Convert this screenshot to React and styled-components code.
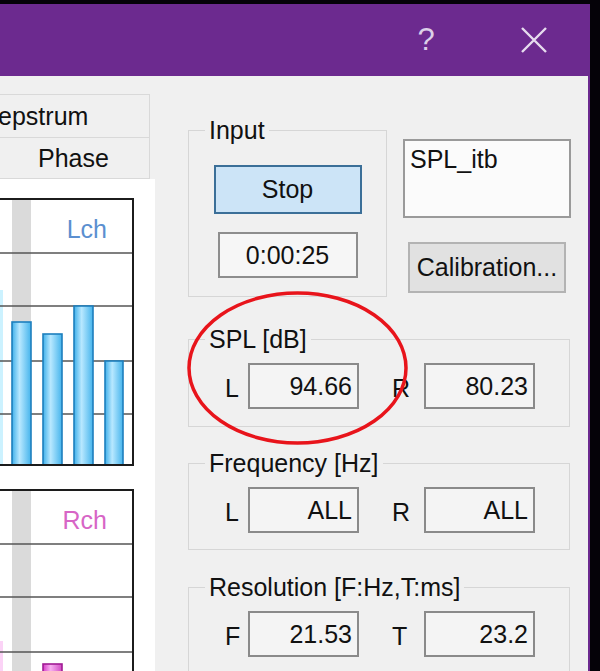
import styled, { createGlobalStyle } from 'styled-components'

const GlobalStyle = createGlobalStyle`
  html, body {
    margin: 0;
    padding: 0;
    background: #000;
  }
  body {
    font-family: "Liberation Sans", Arial, sans-serif;
    color: #111;
  }
`

const lchBars = [
  { x: 50, w: 19, top: 122 },
  { x: 81, w: 19, top: 134 },
  { x: 112, w: 19, top: 106 },
  { x: 143, w: 18, top: 161 },
]

const rchBars = [{ x: 81, w: 19, top: 173 }]

const Chart = ({ label, color, bars, glow, glowTop, id, stops, stroke }) => (
  <ChartFrame>
    <svg width="170" height="264" viewBox="0 0 170 264">
      <defs>
        <linearGradient id={id} x1="0" x2="1" y1="0" y2="0">
          <stop offset="0%" stopColor={stops[0]} />
          <stop offset="40%" stopColor={stops[1]} />
          <stop offset="100%" stopColor={stops[2]} />
        </linearGradient>
      </defs>
      <rect x="50" y="0" width="19" height="264" fill="#dadada" />
      <rect x="0" y={glowTop} width="41" height={264 - glowTop} fill={glow} />
      {[53, 106, 161, 214].map(y => (
        <line key={y} x1="0" x2="170" y1={y} y2={y} stroke="#555" strokeWidth="1.6" />
      ))}
      {bars.map(b => (
        <rect
          key={b.x}
          x={b.x}
          y={b.top}
          width={b.w}
          height={266 - b.top}
          fill={`url(#${id})`}
          stroke={stroke}
          strokeWidth="1.6"
        />
      ))}
      <text
        x="145"
        y="38"
        textAnchor="end"
        fontSize="25"
        fontFamily="Liberation Sans, Arial, sans-serif"
        fill={color}
      >
        {label}
      </text>
    </svg>
  </ChartFrame>
)

const ValueRow = ({ left, right, a, b }) => (
  <Row>
    <ChanLabel>{left}</ChanLabel>
    <ValueBox>{a}</ValueBox>
    <ChanLabel $second>{right}</ChanLabel>
    <ValueBox>{b}</ValueBox>
  </Row>
)

const App = () => {
  return (
    <>
      <GlobalStyle />
      <Screen>
        <Window>
          <TitleBar>
            <TitleButton>?</TitleButton>
            <TitleButton>
              <svg width="26" height="26" viewBox="0 0 26 26">
                <path d="M1 1 L25 25 M25 1 L1 25" stroke="#e6dcee" strokeWidth="2.4" />
              </svg>
            </TitleButton>
          </TitleBar>

          <Body>
            <LeftColumn>
              <Tab $indent={39} $first>Cepstrum</Tab>
              <Tab $indent={97}>Phase</Tab>
              <Page>
                <Chart
                  id="lch"
                  label="Lch"
                  color="#5b8fd0"
                  bars={lchBars}
                  glow="#ccf2ff"
                  glowTop={90}
                  stops={['#3fb0ea', '#b8e8ff', '#45b4ec']}
                  stroke="#1d7fbd"
                />
                <Chart
                  id="rch"
                  label="Rch"
                  color="#d765c6"
                  bars={rchBars}
                  glow="#fbd3f6"
                  glowTop={150}
                  stops={['#d63cc8', '#f7b0f0', '#d04ac4']}
                  stroke="#a01c94"
                />
              </Page>
            </LeftColumn>

            <RightColumn>
              <TopRow>
                <Group $height={180}>
                  <Legend>Input</Legend>
                  <InputBody>
                    <StopButton>Stop</StopButton>
                    <TimeBox>0:00:25</TimeBox>
                  </InputBody>
                </Group>
                <SideStack>
                  <NameBox>SPL_itb</NameBox>
                  <CalButton>Calibration...</CalButton>
                </SideStack>
              </TopRow>

              <Group $height={101} $top={29}>
                <Legend>SPL [dB]</Legend>
                <ValueRow left="L" right="R" a="94.66" b="80.23" />
              </Group>

              <Group $height={100} $top={23}>
                <Legend>Frequency [Hz]</Legend>
                <ValueRow left="L" right="R" a="ALL" b="ALL" />
              </Group>

              <Group $height={110} $top={24}>
                <Legend>Resolution [F:Hz,T:ms]</Legend>
                <ValueRow left="F" right="T" a="21.53" b="23.2" />
              </Group>
            </RightColumn>
          </Body>

          <Marker width="228" height="160" viewBox="0 0 228 160">
            <ellipse cx="113.5" cy="79" rx="108.5" ry="75" fill="none" stroke="#e8141b" strokeWidth="3.5" />
          </Marker>
        </Window>
      </Screen>
    </>
  )
}

export default App

const Screen = styled.div`
  width: 600px;
  height: 671px;
  overflow: hidden;
  background: #050208;
  padding-top: 4px;
  box-sizing: border-box;
`

const Window = styled.div`
  position: relative;
  width: 590px;
  height: 100%;
  border-right: 2px solid #6c2a8f;
  box-sizing: border-box;
  background: #f0f0f0;
  overflow: hidden;
  display: flex;
  flex-direction: column;
`

const TitleBar = styled.div`
  height: 72px;
  flex: none;
  background: #6c2a8f;
  display: flex;
  justify-content: flex-end;
`

const TitleButton = styled.div`
  width: 108px;
  display: grid;
  place-items: center;
  color: #dccfe8;
  font-size: 31px;
`

const Body = styled.div`
  flex: 1;
  display: flex;
  min-height: 0;
`

const LeftColumn = styled.div`
  margin-left: -60px;
  width: 215px;
  flex: none;
  display: flex;
  flex-direction: column;
  padding-top: 18px;
`

const Tab = styled.div`
  flex: none;
  width: 210px;
  height: ${p => (p.$first ? 43 : 42)}px;
  box-sizing: border-box;
  border: 1px solid #d9d9d9;
  border-bottom: ${p => (p.$first ? 'none' : '1px solid #d9d9d9')};
  padding-left: ${p => p.$indent}px;
  display: flex;
  align-items: center;
  font-size: 25px;
  color: #111;
`

const Page = styled.div`
  flex: none;
  background: #fff;
  padding: 19px 21px 40px 20px;
  display: flex;
  flex-direction: column;
  gap: 23px;
`

const ChartFrame = styled.div`
  height: 268px;
  flex: none;
  box-sizing: border-box;
  border: 2px solid #1c1c1c;
  background: #fff;

  svg {
    display: block;
  }
`

const RightColumn = styled.div`
  margin-left: 33px;
  width: 383px;
  padding-top: 41px;
  display: flex;
  flex-direction: column;
`

const TopRow = styled.div`
  display: flex;
  align-items: flex-start;
`

const Group = styled.fieldset`
  margin: ${p => p.$top || 0}px 0 0;
  padding: 0;
  width: 382px;
  height: ${p => p.$height}px;
  box-sizing: border-box;
  border: 1px solid #d6d6d6;
  min-width: 0;
  flex: none;

  ${TopRow} & {
    width: 199px;
  }
`

const Legend = styled.legend`
  margin-left: 16px;
  padding: 0 4px;
  font-size: 25px;
  line-height: 26px;
  color: #111;
`

const InputBody = styled.div`
  display: flex;
  flex-direction: column;
  align-items: center;
  gap: 18px;
  padding-top: 22px;
`

const StopButton = styled.div`
  width: 148px;
  height: 49px;
  box-sizing: border-box;
  border: 2px solid #3b6f98;
  background: #cce4f7;
  display: grid;
  place-items: center;
  font-size: 25px;
`

const TimeBox = styled.div`
  width: 140px;
  height: 46px;
  box-sizing: border-box;
  border: 2px solid #8d8d8d;
  background: #f6f6f6;
  display: grid;
  place-items: center;
  font-size: 25px;
`

const SideStack = styled.div`
  margin-left: 16px;
  width: 168px;
  padding-top: 22px;
  display: flex;
  flex-direction: column;
  align-items: center;
  gap: 24px;
`

const NameBox = styled.div`
  width: 168px;
  height: 79px;
  box-sizing: border-box;
  border: 2px solid #9a9a9a;
  background: #fbfbfb;
  padding: 4px 5px;
  font-size: 25px;
  line-height: 28px;
`

const CalButton = styled.div`
  width: 158px;
  height: 51px;
  box-sizing: border-box;
  border: 2px solid #b3b3b3;
  background: #e1e1e1;
  display: grid;
  place-items: center;
  font-size: 25px;
`

const Row = styled.div`
  display: flex;
  align-items: center;
  padding: 11px 0 0 36px;
`

const ChanLabel = styled.div`
  width: ${p => (p.$second ? 32 : 23)}px;
  margin-left: ${p => (p.$second ? 33 : 0)}px;
  font-size: 25px;
  padding-top: 4px;
`

const ValueBox = styled.div`
  width: 111px;
  height: 46px;
  box-sizing: border-box;
  border: 2px solid #8a8a8a;
  background: #f4f4f4;
  text-align: right;
  padding-right: 5px;
  font-size: 25px;
  line-height: 42px;
`

const Marker = styled.svg`
  position: absolute;
  left: 184px;
  top: 285px;
  pointer-events: none;
`
